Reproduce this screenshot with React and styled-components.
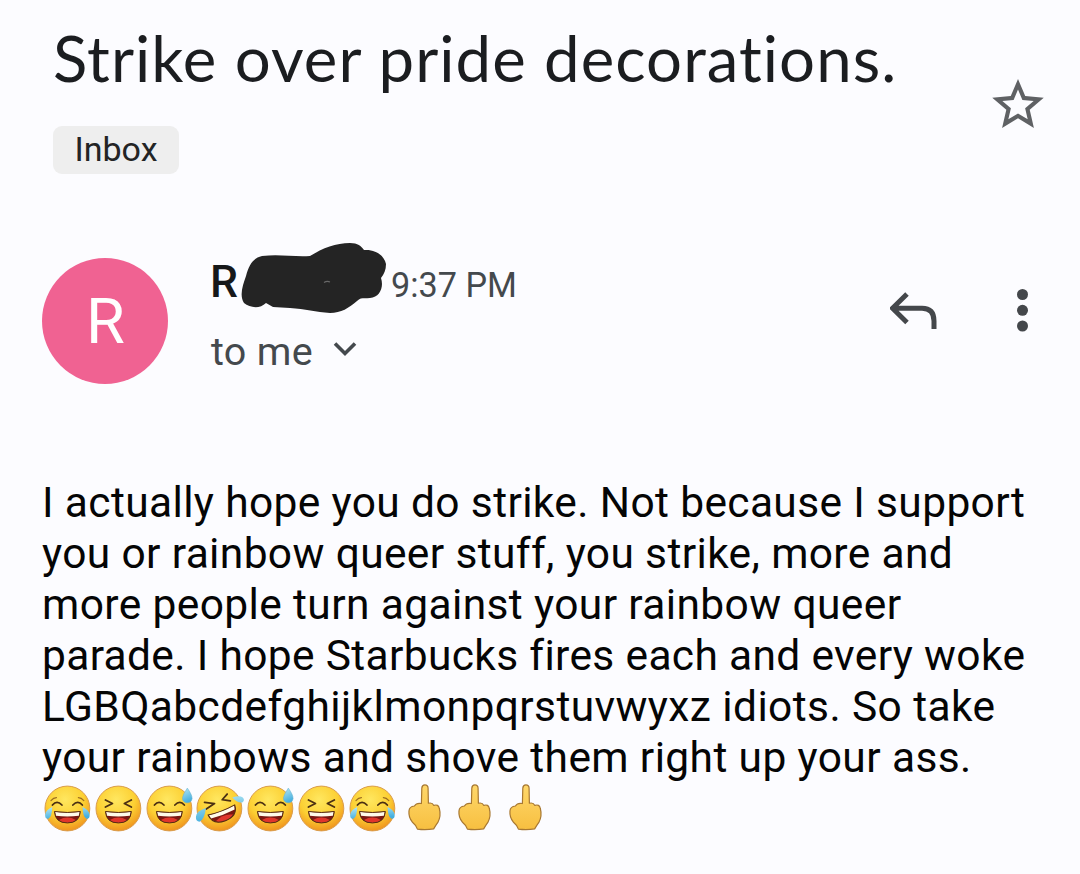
import React from 'react';
import styled, { createGlobalStyle } from 'styled-components';

const GlobalStyle = createGlobalStyle`
  * { box-sizing: border-box; }
  body { margin: 0; background: #fcfcff; }
`;

const Screen = styled.main`
  width: 1080px;
  height: 874px;
  overflow: hidden;
  background: #fcfcff;
  font-family: Roboto, "Noto Sans", sans-serif;
`;

const SubjectBar = styled.header`
  display: flex;
  justify-content: space-between;
  height: 192px;
  padding: 20px 36px 0 53px;
`;

const Subject = styled.h1`
  margin: 0;
  font-family: Lato, sans-serif;
  font-size: 63.5px;
  font-weight: 400;
  line-height: 76px;
  letter-spacing: 1.05px;
  color: #1b1d20;
  white-space: nowrap;
`;

const Label = styled.span`
  display: flex;
  align-items: center;
  justify-content: center;
  width: 126px;
  height: 48px;
  margin-top: 30px;
  padding-bottom: 2px;
  border-radius: 9px;
  background: #eeeeee;
  color: #232425;
  font-size: 34px;
  line-height: 46px;
`;

const StarIcon = styled.svg`
  width: 52px;
  height: 52px;
  margin-top: 58.5px;
`;

const SenderRow = styled.section`
  display: flex;
  height: 285px;
  padding: 50px 48px 0 42px;
`;

const Avatar = styled.div`
  display: flex;
  align-items: center;
  justify-content: center;
  width: 126px;
  height: 126px;
  margin-top: 16px;
  padding: 2px 0 0 1px;
  border-radius: 50%;
  background: #f06292;
  color: #fff;
  font-size: 63px;
  line-height: 124px;
`;

const SenderInfo = styled.div`
  flex: 1;
  padding-left: 42px;
`;

const NameLine = styled.div`
  display: flex;
  align-items: baseline;
  height: 74px;
`;

const Name = styled.span`
  width: 29px;
  font-size: 44.5px;
  font-weight: 500;
  line-height: 80px;
  color: #16181a;
`;

const Scribble = styled.svg`
  align-self: flex-start;
  width: 150px;
  height: 76px;
`;

const Time = styled.span`
  margin-left: 2px;
  font-size: 34.2px;
  color: #44494d;
  white-space: nowrap;
`;

const Recipient = styled.div`
  display: flex;
  align-items: center;
  height: 71px;
  padding-left: 1px;
  font-size: 39.5px;
  line-height: 71px;
  letter-spacing: 0.3px;
  color: #44494d;
`;

const Chevron = styled.svg`
  width: 24px;
  height: 16px;
  margin-left: 20px;
  margin-top: -6px;
`;

const Actions = styled.div`
  display: flex;
  justify-content: space-between;
  width: 142px;
  height: 46px;
  margin-top: 45px;
`;

const ReplyIcon = styled.svg`
  width: 50px;
  height: 46px;
`;

const MoreIcon = styled.svg`
  width: 16px;
  height: 46px;
`;

const Body = styled.article`
  padding-left: 42px;
  color: #050505;
  font-size: 42.5px;
  line-height: 51px;
`;

const Line = styled.div`
  height: 51px;
  white-space: nowrap;
  letter-spacing: ${(p) => p.$spacing}px;
`;

const EmojiRow = styled.div`
  display: flex;
`;

const Emoji = styled.svg`
  width: 50.8px;
  height: 51px;
  flex: none;
`;

const LINES = [
  ['I actually hope you do strike. Not because I support', 0.36],
  ['you or rainbow queer stuff, you strike, more and', 0.36],
  ['more people turn against your rainbow queer', 0.38],
  ['parade. I hope Starbucks fires each and every woke', 0.34],
  ['LGBQabcdefghijklmonpqrstuvwyxz idiots. So take', 0.4],
  ['your rainbows and shove them right up your ass.', 0.38],
];

const EMOJIS = ['joy', 'laugh', 'sweat', 'rofl', 'sweat', 'laugh', 'joy', 'finger', 'finger', 'finger'];

const Mouth = () => (
  <>
    <path d="M12.5 29.5Q25.5 31.5 38.5 29.5Q37.8 41 25.5 41Q13.2 41 12.5 29.5Z" fill="#7b1712" />
    <path d="M17 38Q25.5 33 34 38Q31 41 25.5 41Q20 41 17 38Z" fill="#e0352b" />
    <path d="M13 29.8Q25.5 31.7 38 29.8L37 33.8Q25.5 35.2 14 33.8Z" fill="#fffbe9" />
    <path d="M12.5 29.5Q25.5 31.5 38.5 29.5Q37.8 41 25.5 41Q13.2 41 12.5 29.5Z" fill="none" stroke="#552d13" strokeWidth="1" />
  </>
);

const Squint = () => (
  <path d="M12.5 18L19.5 21.5L12.5 25M38.5 18L31.5 21.5L38.5 25" fill="none" stroke="#4b3013" strokeWidth="1.8" strokeLinecap="round" strokeLinejoin="round" />
);

const SmileEyes = () => (
  <path d="M10.5 23Q15 17.5 20 23M31 23Q36 17.5 40.5 23" fill="none" stroke="#4b3013" strokeWidth="1.8" strokeLinecap="round" />
);

function Face({ kind }) {
  return (
    <>
      <circle cx="25.5" cy="26.5" r="22.5" fill="url(#face)" stroke="#d99b4c" strokeWidth="1" />
      {kind === 'laugh' && <><Squint /><Mouth /></>}
      {kind === 'sweat' && (
        <>
          <SmileEyes />
          <Mouth />
          <path d="M43.5 6Q48.5 13 48.3 16.5Q47.5 21 43 20.8Q38.2 20 38.7 15.5Q39.2 12.5 43.5 6Z" fill="url(#tear)" stroke="#64aeca" strokeWidth=".5" />
        </>
      )}
      {kind === 'joy' && (
        <>
          <SmileEyes />
          <path d="M9 18.5Q11.5 15.5 14.5 15.5M36.5 15.5Q39.5 15.5 42 18.5" fill="none" stroke="#9b6b20" strokeWidth="1.2" strokeLinecap="round" />
          <Mouth />
          <path d="M10.3 25Q4 28 3.2 32.5Q2.7 37 6.5 36.7Q10 35 10.3 25ZM40.7 25Q47 28 47.8 32.5Q48.3 37 44.5 36.7Q41 35 40.7 25Z" fill="url(#tear)" />
        </>
      )}
      {kind === 'rofl' && (
        <>
          <path d="M10.6 20.3L20.6 21.5L12.3 27M33.3 12L28.3 17.7L36.5 18.9" fill="none" stroke="#4b3013" strokeWidth="1.8" strokeLinecap="round" strokeLinejoin="round" />
          <g transform="translate(27.5 28) rotate(-21) scale(1.1 1) translate(-25.5 -29.5)"><Mouth /></g>
          <path d="M12 26Q2.5 29 2 34.5Q1.5 39.5 5.5 39.7Q10.5 38 12 26ZM38.5 15.5Q45.5 13 49 15.5Q51.5 18.5 48.5 20.5Q43.5 21.3 38.5 15.5Z" fill="url(#tear)" />
        </>
      )}
    </>
  );
}

function Finger() {
  return (
    <path
      transform="translate(1.5 -1)"
      d="M22 22.5L22.4 7Q22.7 3.8 25.5 3.8Q28.5 3.8 28.7 7L29 22.2Q33 21.2 34.5 24.4Q39 22.8 40 27.5Q42 35 38.5 41.5Q36 45 34.3 48Q26 49.3 18 48.2Q16.5 44 12.8 41Q9 36 9.5 30Q9.8 25.5 15 25Q17 21.5 22 22.5Z"
      fill="url(#hand)" stroke="#a87832" strokeWidth="1.2" strokeLinejoin="round"
    />
  );
}

export default function App() {
  return (
    <Screen>
      <GlobalStyle />
      <svg width="0" height="0" style={{ display: 'block' }}>
        <defs>
          <radialGradient id="face" cx=".45" cy=".3" r=".72">
            <stop offset="0" stopColor="#ffe760" />
            <stop offset=".58" stopColor="#fcd033" />
            <stop offset="1" stopColor="#ef901d" />
          </radialGradient>
          <linearGradient id="tear" x1="0" y1="0" x2=".3" y2="1">
            <stop stopColor="#b8e8f4" />
            <stop offset="1" stopColor="#45afdf" />
          </linearGradient>
          <linearGradient id="hand" x1="0" y1="0" x2="0" y2="1">
            <stop stopColor="#ffd86b" />
            <stop offset="1" stopColor="#f7bf40" />
          </linearGradient>
        </defs>
      </svg>
      <SubjectBar>
        <div>
          <Subject>Strike over pride decorations.</Subject>
          <Label>Inbox</Label>
        </div>
        <StarIcon viewBox="1.9 2 20.2 20.2">
          <path fill="#5f6164" d="M22 9.24l-7.19-.62L12 2 9.19 8.63 2 9.24l5.46 4.73L5.82 21 12 17.27 18.18 21l-1.63-7.03L22 9.24zM12 15.4l-3.76 2.27 1-4.28-3.32-2.88 4.38-.38L12 6.1l1.71 4.04 4.38.38-3.32 2.88 1 4.28L12 15.4z" />
        </StarIcon>
      </SubjectBar>
      <SenderRow>
        <Avatar>R</Avatar>
        <SenderInfo>
          <NameLine>
            <Name>R</Name>
            <Scribble viewBox="239 242 150 76">
              <path fill="#242424" d="M262 256C280 254 293 257 310 256C323 248 336 243 350 243C358 243 361 246 364 250C375 249 384 255 386 264C386 270 384 274 381 278C384 287 380 297 370 298C364 299 361 297 357 301C349 308 341 313 330 313C316 312 305 309 290 308L273 307L266 303C260 309 250 308 244 303C239 295 243 285 246 276C249 265 253 258 262 256Z" />
              <path d="M324 282.5Q327 280.5 330 282" fill="none" stroke="#686868" strokeWidth="1.2" />
            </Scribble>
            <Time>9:37 PM</Time>
          </NameLine>
          <Recipient>
            to me
            <Chevron viewBox="0 0 24 16">
              <path d="M2 2.5L12 12.5L22 2.5" fill="none" stroke="#44494d" strokeWidth="3.6" />
            </Chevron>
          </Recipient>
        </SenderInfo>
        <Actions>
          <ReplyIcon viewBox="890 287 50 46">
            <path d="M907 294L892.5 308.3L907 322.5M893 308.3H922Q934 308.3 934 321V329" fill="none" stroke="#44474b" strokeWidth="5" />
          </ReplyIcon>
          <MoreIcon viewBox="0 0 16 46" fill="#44474b">
            <circle cx="6.5" cy="7.5" r="5.5" />
            <circle cx="6.5" cy="23.3" r="5.5" />
            <circle cx="6.5" cy="39" r="5.5" />
          </MoreIcon>
        </Actions>
      </SenderRow>
      <Body>
        {LINES.map(([text, spacing]) => <Line key={text} $spacing={spacing}>{text}</Line>)}
        <EmojiRow>
          {EMOJIS.map((kind, i) => (
            <Emoji key={i} viewBox="0 1 51 51">
              {kind === 'finger' ? <Finger /> : <Face kind={kind} />}
            </Emoji>
          ))}
        </EmojiRow>
      </Body>
    </Screen>
  );
}
